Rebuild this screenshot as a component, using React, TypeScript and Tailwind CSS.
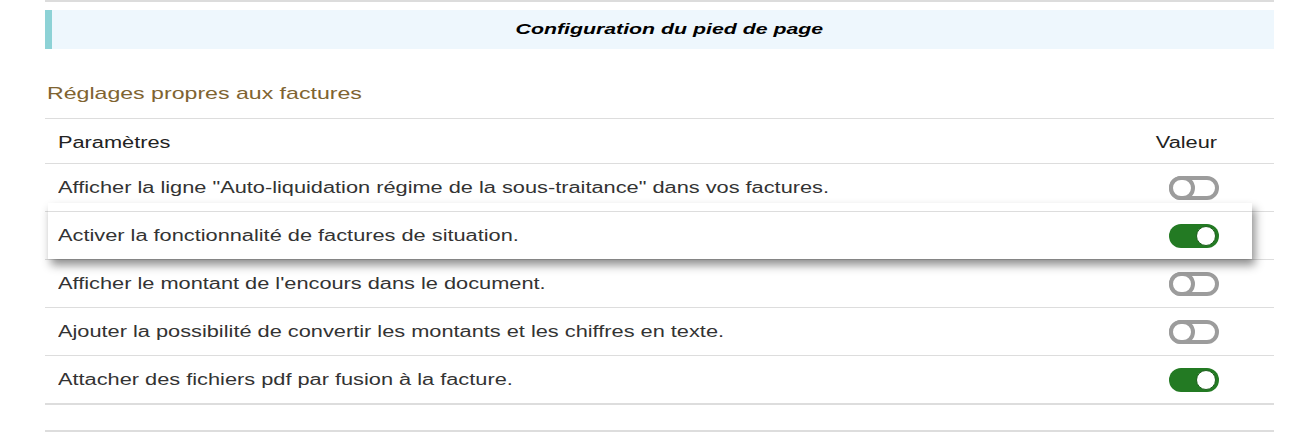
import React from 'react';

interface Setting {
  label: string;
  enabled: boolean;
  highlighted?: boolean;
}

const settings: Setting[] = [
  { label: 'Afficher la ligne "Auto-liquidation régime de la sous-traitance" dans vos factures.', enabled: false },
  { label: 'Activer la fonctionnalité de factures de situation.', enabled: true, highlighted: true },
  { label: "Afficher le montant de l'encours dans le document.", enabled: false },
  { label: 'Ajouter la possibilité de convertir les montants et les chiffres en texte.', enabled: false },
  { label: 'Attacher des fichiers pdf par fusion à la facture.', enabled: true },
];

const Toggle: React.FC<{ on: boolean }> = ({ on }) => {
  if (on) {
    return (
      <div className="relative w-[50px] h-[24px] rounded-full bg-[#237a23] shrink-0">
        <div className="absolute right-[3px] top-[2px] w-[20px] h-[20px] rounded-full bg-white border border-[#1d5e1d]" />
      </div>
    );
  }
  return (
    <div className="relative w-[50px] h-[24px] rounded-full border-[4px] border-[#9c9c9c] bg-white shrink-0">
      <div className="absolute -left-[4px] -top-[4px] w-[26px] h-[24px] rounded-full border-[4px] border-[#9c9c9c] bg-white" />
    </div>
  );
};

// the page text is drawn wide, so glyphs are stretched horizontally
const Label: React.FC<{ children: React.ReactNode }> = ({ children }) => (
  <span className="inline-block whitespace-nowrap origin-left scale-x-[1.36]">{children}</span>
);

export default function App() {
  return (
    <div className="w-[1311px] h-[435px] bg-white pl-[45px] pr-[37px] text-[16px] text-[#333] font-['Liberation_Sans',Arial,sans-serif]">
      <div className="h-[2px] bg-[#dcdcdc]" />

      <div className="mt-[8px] h-[39px] bg-[#eef7fd] border-l-[7px] border-[#8dd2d6] pl-[12px] flex items-center justify-center">
        <span className="inline-block font-bold italic text-[15px] text-black scale-x-[1.42]">
          Configuration du pied de page
        </span>
      </div>

      <h2 className="mt-[35px] mb-[14px] ml-[2px] h-[20px] leading-[20px] text-[17px] text-[#7f6431]">
        <Label>Réglages propres aux factures</Label>
      </h2>

      <div>
        <div className="h-[45px] border-t border-[#dddddd] pt-[3px] flex items-center justify-between pl-[13px] pr-[57px] text-[#222]">
          <Label>Paramètres</Label>
          <span className="inline-block origin-right scale-x-[1.36]">Valeur</span>
        </div>

        {settings.map((s, i) =>
          s.highlighted ? (
            <div
              key={i}
              className="relative z-10 -mt-[9px] ml-[3px] mr-[22px] bg-white pt-[8px] shadow-[3px_6px_9px_rgba(0,0,0,0.45)]"
            >
              <div className="h-[48px] border-t border-[#dddddd] flex items-center justify-between pl-[10px] pr-[33px]">
                <Label>{s.label}</Label>
                <Toggle on={s.enabled} />
              </div>
            </div>
          ) : (
            <div
              key={i}
              className={
                'h-[48px] border-t border-[#dddddd] flex items-center justify-between pl-[13px] pr-[55px]' +
                (i === 0 ? ' h-[49px] border-b' : '')
              }
            >
              <Label>{s.label}</Label>
              <Toggle on={s.enabled} />
            </div>
          )
        )}

        <div className="h-[2px] bg-[#dddddd]" />
        <div className="h-[25px]" />
        <div className="h-[2px] bg-[#dddddd]" />
      </div>
    </div>
  );
}
